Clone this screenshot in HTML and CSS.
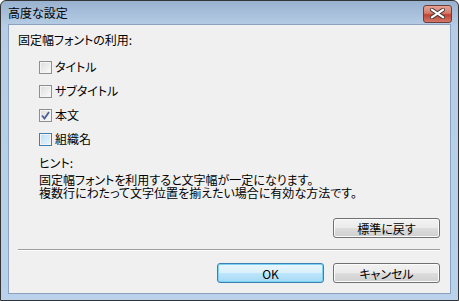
FILE: index.html
```html
<!DOCTYPE html>
<html lang="ja">
  <head>
    <meta charset="UTF-8" />
    <title>高度な設定</title>
    <link rel="stylesheet" href="styles.css">
  </head>
  <body>
    <div class="window">
      <div class="titlebar">
        <span class="title">高度な設定</span>
        <button class="close" type="button" aria-label="閉じる">
          <svg width="15" height="11" viewBox="0 0 15 11">
            <path d="M2 1.8 L13 9.2 M13 1.8 L2 9.2" stroke="#3b3030" stroke-width="4" stroke-linecap="square"/>
            <path d="M2 1.8 L13 9.2 M13 1.8 L2 9.2" stroke="#ffffff" stroke-width="2.2" stroke-linecap="square"/>
          </svg>
        </button>
      </div>
      <div class="client">
        <p class="heading">固定幅フォントの利用:</p>
        <div class="options">
          <label class="option"><span class="box"></span>タイトル</label>
          <label class="option"><span class="box"></span>サブタイトル</label>
          <label class="option"><span class="box">
            <svg width="9" height="9" viewBox="0 0 9 9"><path d="M1 4.5 L3.5 7.5 L8 1" fill="none" stroke="#4a5f97" stroke-width="1.8"/></svg>
          </span>本文</label>
          <label class="option"><span class="box hot"></span>組織名</label>
        </div>
        <div class="hint">
          <p>ヒント:</p>
          <p class="hint-text">固定幅フォントを利用すると文字幅が一定になります。</p>
          <p>複数行にわたって文字位置を揃えたい場合に有効な方法です。</p>
        </div>
        <div class="reset-row">
          <button class="btn" type="button">標準に戻す</button>
        </div>
        <hr class="sep">
        <div class="footer">
          <button class="btn default" type="button">OK</button>
          <button class="btn" type="button">キャンセル</button>
        </div>
      </div>
    </div>
  </body>
</html>
```

FILE: styles.css
```css
body {
  margin: 0;
  font-family: "Noto Sans CJK JP", "Liberation Sans", sans-serif;
  font-size: 12px;
  font-feature-settings: "palt";
  color: #000;
  background: #fff;
}

.window {
  width: 459px;
  height: 301px;
  box-sizing: border-box;
  border: 1px solid #343434;
  border-radius: 6px 6px 0 0;
  background: linear-gradient(#98b2cf, #b7cde6 25px, #b9d1ea);
  padding: 0 7px 6px 7px;
  display: flex;
  flex-direction: column;
}

.titlebar {
  height: 23px;
  display: flex;
  align-items: center;
  justify-content: space-between;
}

.title {
  line-height: 14px;
  padding-top: 1px;
}

.close {
  width: 29px;
  height: 18px;
  margin-right: -1px;
  margin-top: 2px;
  padding: 0;
  border: 1px solid #6b3e3a;
  border-radius: 3px;
  background: linear-gradient(#e8a293, #d47a6a 45%, #c0412e 55%, #d2796a);
  display: flex;
  align-items: center;
  justify-content: center;
}

.client {
  flex: 1;
  background: #f0f0f0;
  border: 1px solid #8aa2bd;
  padding: 8px 10px 0 9px;
}

.heading {
  margin: 0;
  line-height: 14px;
}

.options {
  display: flex;
  flex-direction: column;
  gap: 10px;
  margin: 13px 0 0 21px;
}

.option {
  display: flex;
  align-items: center;
  gap: 3px;
  height: 14px;
  line-height: 14px;
}

.box {
  width: 11px;
  height: 11px;
  border: 1px solid #8e8f8f;
  background: linear-gradient(135deg, #dcdcdc, #fbfbfb);
  box-shadow: inset 0 0 0 1px #f4f4f4;
  display: flex;
  align-items: center;
  justify-content: center;
}

.box.hot {
  border-color: #3c7fb1;
  background: linear-gradient(135deg, #b9def6, #eaf6fd);
}

.hint {
  margin: 10px 0 0 21px;
}

.hint p {
  margin: 0;
  height: 13px;
  line-height: 13px;
}

.hint .hint-text {
  margin-top: 4px;
}

.reset-row {
  display: flex;
  justify-content: flex-end;
  margin-top: 19px;
}

.btn {
  width: 107px;
  height: 20px;
  font-family: inherit;
  font-size: 12px;
  font-feature-settings: "palt";
  padding: 0;
  border: 1px solid #707070;
  border-radius: 3px;
  background: linear-gradient(#f2f2f2, #ebebeb 50%, #dddddd 50%, #cfcfcf);
  box-shadow: inset 0 0 0 1px #fcfcfc;
}

.btn.default {
  border-color: #3c7fb1;
  background: linear-gradient(#eaf6fd, #d9f0fc 50%, #bee6fd 50%, #a7d9f5);
  box-shadow: inset 0 0 0 1px #7ad2f4;
}

.sep {
  margin: 11px 0 0 0;
  border: 0;
  border-top: 1px solid #a0a0a0;
  border-bottom: 1px solid #ffffff;
}

.footer {
  display: flex;
  justify-content: flex-end;
  gap: 9px;
  margin-top: 12px;
}
```
